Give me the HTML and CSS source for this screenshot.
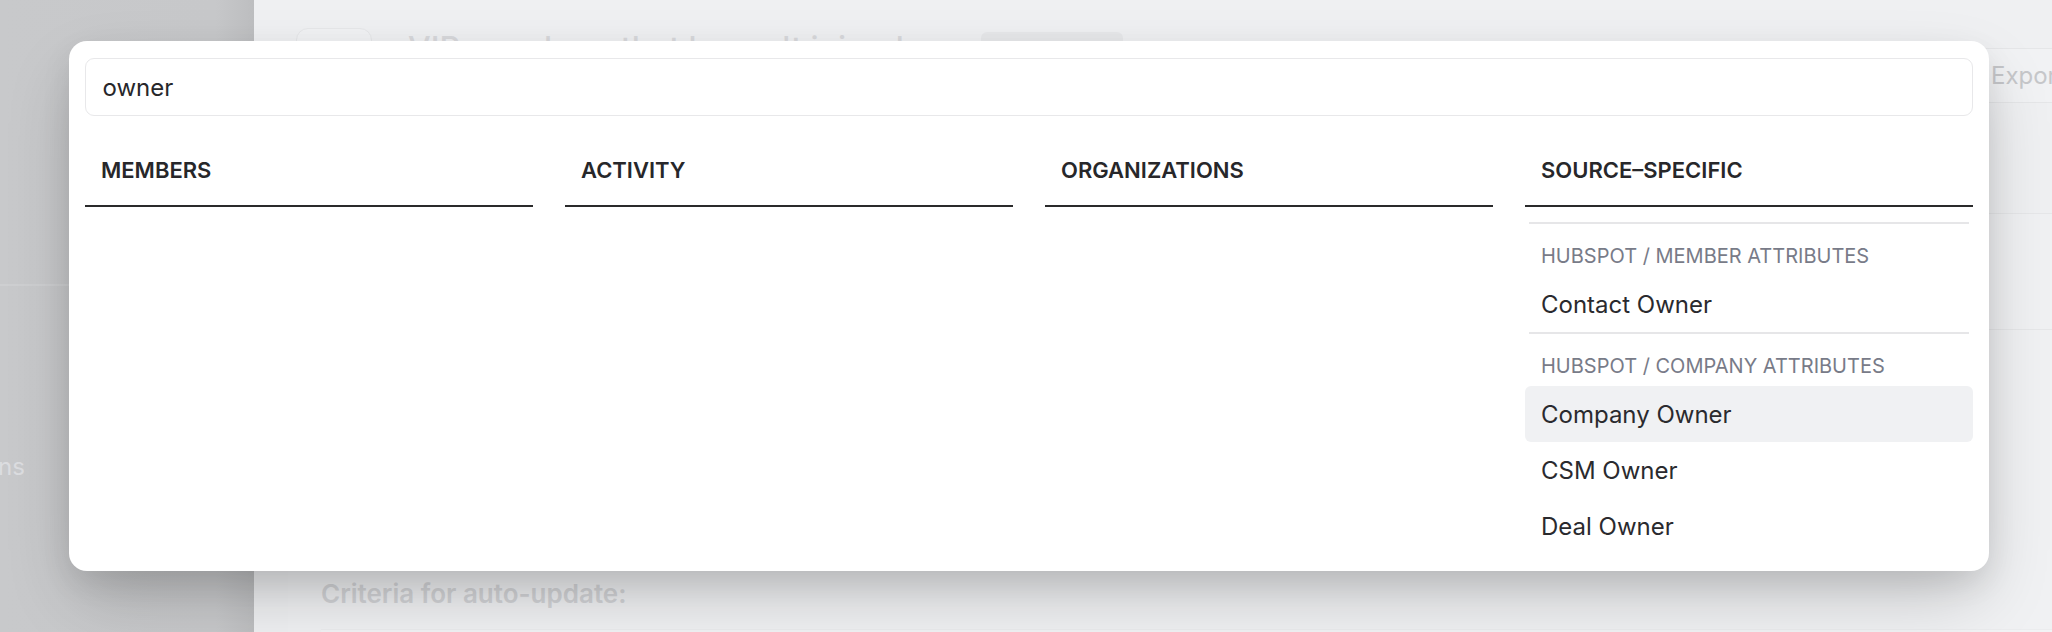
FILE: index.html
```html
<!DOCTYPE html>
<html lang="en">
<head>
<meta charset="utf-8">
<title>Filter attributes</title>
<link rel="stylesheet" href="styles.css">
</head>
<body>
<div class="app">
  <aside class="sidebar">
    <div class="side-top"></div>
    <div class="side-item">ns</div>
  </aside>
  <main class="main">
    <div class="topbar">
      <div class="back"></div>
      <h1 class="title">VIP members that haven't joined</h1>
      <span class="badge"></span>
      <button class="export">Export</button>
    </div>
    <div class="card"></div>
    <div class="panel">
      <div class="criteria">Criteria for auto-update:</div>
      <div class="panel-inner"></div>
    </div>
  </main>
</div>

<div class="modal">
  <div class="search">owner</div>
  <div class="cols">
    <section class="col">
      <div class="col-head">MEMBERS</div>
    </section>
    <section class="col">
      <div class="col-head">ACTIVITY</div>
    </section>
    <section class="col">
      <div class="col-head">ORGANIZATIONS</div>
    </section>
    <section class="col">
      <div class="col-head">SOURCE–SPECIFIC</div>
      <div class="list">
        <div class="sep"></div>
        <div class="group-label">HUBSPOT / MEMBER ATTRIBUTES</div>
        <div class="item">Contact Owner</div>
        <div class="sep"></div>
        <div class="group-label">HUBSPOT / COMPANY ATTRIBUTES</div>
        <div class="item active">Company Owner</div>
        <div class="item">CSM Owner</div>
        <div class="item">Deal Owner</div>
      </div>
    </section>
  </div>
</div>
</body>
</html>
```

FILE: styles.css
```css
html, body {
  margin: 0;
  padding: 0;
}
body {
  width: 2052px;
  height: 632px;
  overflow: hidden;
  position: relative;
  font-family: Inter, "Noto Sans", "Liberation Sans", sans-serif;
  background: #eff0f2;
}

/* background app (dimmed) */
.app {
  display: flex;
  height: 632px;
}
.sidebar {
  width: 254px;
  flex: none;
  background: linear-gradient(to right, #c8c9cb 0%, #c7c8ca 85%, #bdbec0 100%);
  display: flex;
  flex-direction: column;
}
.side-top {
  height: 284px;
  border-bottom: 2px solid #cecfd1;
}
.side-item {
  margin-top: 166px;
  font-size: 24px;
  line-height: 30px;
  color: #dcdde0;
  margin-left: -2px;
}
.main {
  flex: 1;
  overflow: hidden;
  padding-left: 34px;
  background: #eff0f2;
}
.topbar {
  display: flex;
  align-items: flex-start;
  width: calc(100% + 60px);
  height: 100px;
}
.back {
  width: 76px;
  height: 60px;
  margin-top: 28px;
  margin-left: 8px;
  box-sizing: border-box;
  border: 1.5px solid #e6e7e9;
  border-radius: 12px;
  background: #f1f2f4;
  flex: none;
}
.title {
  margin: 29px 0 0 36px;
  font-size: 32px;
  line-height: 40px;
  font-weight: 500;
  color: #d8d9dc;
  white-space: nowrap;
}
.badge {
  width: 142px;
  height: 36px;
  margin-top: 32px;
  margin-left: 77px;
  background: #e7e8ea;
  border-radius: 6px;
  flex: none;
}
.export {
  margin-left: auto;
  margin-top: 48px;
  width: 137px;
  height: 55px;
  box-sizing: border-box;
  border: 1.5px solid #e5e6e8;
  border-radius: 9px;
  background: #f1f2f4;
  font-family: inherit;
  font-size: 24px;
  color: #c6c7ca;
  text-align: left;
  padding: 0 0 0 15px;
  flex: none;
}
.card {
  margin-top: 113px;
  height: 115px;
  border-top: 1.5px solid #e6e7e9;
  border-bottom: 1.5px solid #e6e7e9;
  background: #f0f1f3;
}
.panel {
  height: 400px;
  padding-left: 33px;
  padding-top: 249px;
  background: #f0f1f3;
}
.criteria {
  font-size: 26px;
  line-height: 30px;
  font-weight: 600;
  color: #d4d5d8;
  white-space: nowrap;
}
.panel-inner {
  margin-top: 20px;
  height: 60px;
  background: #f2f3f5;
  border-top: 1px solid #ebecee;
}

/* modal */
.modal {
  position: absolute;
  left: 69px;
  top: 41px;
  width: 1920px;
  box-sizing: border-box;
  padding: 17px 16px 17px;
  background: #ffffff;
  border-radius: 18px;
  box-shadow: 0 30px 70px -10px rgba(0, 0, 0, 0.22), 0 12px 30px rgba(0, 0, 0, 0.08);
}
.search {
  height: 58px;
  box-sizing: border-box;
  border: 1.5px solid #e8e8ea;
  border-radius: 9px;
  padding: 0 16.5px;
  display: flex;
  align-items: center;
  font-size: 24px;
  color: #27272a;
}
.cols {
  display: grid;
  grid-template-columns: repeat(4, 1fr);
  column-gap: 32px;
  margin-top: 20px;
  align-items: start;
}
.col-head {
  padding: 19px 16px 20px;
  font-size: 22px;
  line-height: 30px;
  font-weight: 600;
  color: #27272a;
  border-bottom: 2px solid #2a2a2b;
}
.list {
  padding-top: 15px;
}
.sep {
  height: 2px;
  margin: 0 4px;
  background: #e6e6e8;
}
.group-label {
  padding: 17px 16px 5px;
  font-size: 20px;
  line-height: 30px;
  color: #787b88;
}
.item {
  height: 56px;
  display: flex;
  align-items: center;
  padding: 0 16px;
  font-size: 24px;
  color: #2a2a2e;
  border-radius: 6px;
}
.item.active {
  background: #f0f1f3;
}
```
